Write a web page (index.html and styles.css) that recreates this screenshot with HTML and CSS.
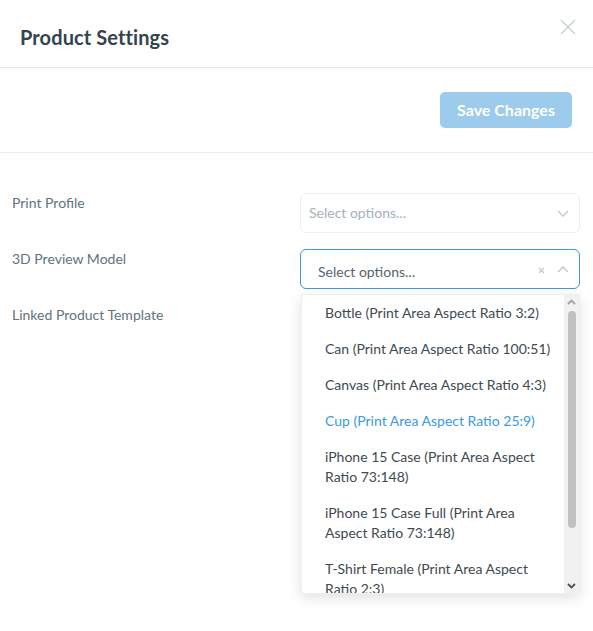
FILE: index.html
```html
<!DOCTYPE html>
<html lang="en">
<head>
<meta charset="utf-8">
<title>Product Settings</title>
<link rel="stylesheet" href="styles.css">
</head>
<body>
<div class="modal">
  <header class="head">
    <h1 class="title">Product Settings</h1>
    <button class="close" type="button" aria-label="Close">
      <svg width="16" height="16" viewBox="0 0 16 16"><path d="M1 1L15 15M15 1L1 15" stroke="#c5d0d3" stroke-width="1.4" fill="none"/></svg>
    </button>
  </header>
  <div class="actions">
    <button class="save" type="button">Save Changes</button>
  </div>
  <div class="form">
    <div class="row">
      <div class="label">Print Profile</div>
      <div class="select">
        <span class="placeholder">Select options...</span>
        <span class="icons">
          <svg class="chev" width="12" height="7" viewBox="0 0 12 7"><path d="M1 1L6 6L11 1" stroke="#bcc6cc" stroke-width="1.3" fill="none"/></svg>
        </span>
      </div>
    </div>
    <div class="row">
      <div class="label">3D Preview Model</div>
      <div class="select open">
        <span class="placeholder">Select options...</span>
        <span class="icons">
          <svg class="clear" width="7" height="7" viewBox="0 0 7 7"><path d="M1 1L6 6M6 1L1 6" stroke="#c3cbd0" stroke-width="1.3" fill="none"/></svg>
          <svg class="chev" width="12" height="7" viewBox="0 0 12 7"><path d="M1 6L6 1L11 6" stroke="#bcc6cc" stroke-width="1.3" fill="none"/></svg>
        </span>
        <div class="menu">
          <ul class="options">
            <li>Bottle (Print Area Aspect Ratio 3:2)</li>
            <li>Can (Print Area Aspect Ratio 100:51)</li>
            <li>Canvas (Print Area Aspect Ratio 4:3)</li>
            <li class="active">Cup (Print Area Aspect Ratio 25:9)</li>
            <li>iPhone 15 Case (Print Area Aspect Ratio 73:148)</li>
            <li>iPhone 15 Case Full (Print Area Aspect Ratio 73:148)</li>
            <li>T-Shirt Female (Print Area Aspect Ratio 2:3)</li>
          </ul>
          <div class="scrollbar">
            <svg class="arrow" width="15" height="14" viewBox="0 0 15 14"><path d="M4 9L7.5 5.5L11 9" stroke="#a3a3a3" stroke-width="1.8" fill="none"/></svg>
            <div class="track"><div class="thumb"></div></div>
            <svg class="arrow" width="15" height="14" viewBox="0 0 15 14"><path d="M4 5L7.5 8.5L11 5" stroke="#505050" stroke-width="1.8" fill="none"/></svg>
          </div>
        </div>
      </div>
    </div>
    <div class="row">
      <div class="label">Linked Product Template</div>
      <div class="empty"></div>
    </div>
  </div>
</div>
</body>
</html>
```

FILE: styles.css
```css
* { box-sizing: border-box; }
html, body { margin: 0; padding: 0; background: #fff; }
body {
  font-family: Lato, "Noto Sans", sans-serif;
  width: 593px;
  height: 631px;
  overflow: hidden;
}
.modal { width: 593px; }

.head {
  height: 68px;
  border-bottom: 1px solid #e9ecef;
  display: flex;
  justify-content: space-between;
  padding: 0 17px 0 20px;
}
.title {
  margin: 0;
  align-self: center;
  font-size: 20px;
  font-weight: 700;
  color: #34444c;
  line-height: 24px;
  padding-top: 6px;
  letter-spacing: 0.1px;
}
.close {
  background: none;
  border: 0;
  padding: 0;
  margin-top: 19px;
  width: 16px;
  height: 16px;
  display: block;
  cursor: pointer;
}
.close svg { display: block; }

.actions {
  height: 85px;
  border-bottom: 1px solid #e9ecef;
  display: flex;
  justify-content: flex-end;
  align-items: flex-start;
  padding: 24px 21px 0 0;
}
.save {
  width: 132px;
  height: 36px;
  background: #9ccbec;
  border: 0;
  border-radius: 5px;
  color: #fff;
  font-family: Lato, "Noto Sans", sans-serif;
  font-weight: 700;
  font-size: 16px;
  padding: 0 0 1px;
}

.form {
  padding: 40px 0 0 12px;
  display: flex;
  flex-direction: column;
  gap: 16px;
}
.row {
  display: grid;
  grid-template-columns: 288px 280px;
  min-height: 40px;
}
.label {
  font-size: 14px;
  line-height: 20px;
  color: #62737c;
}
.select {
  position: relative;
  height: 40px;
  border: 1px solid #ebedee;
  border-radius: 6px;
  display: flex;
  align-items: center;
  padding-left: 8px;
  font-size: 14px;
}
.placeholder { color: #a5b1b8; flex: 1; line-height: 20px; }
.icons {
  display: flex;
  align-items: center;
  gap: 12px;
  padding-right: 10px;
}
.icons svg { display: block; }

.select.open {
  border-color: #3c9be1;
  padding-left: 17px;
  align-items: flex-start;
  padding-top: 12px;
}
.select.open .placeholder { color: #56646c; }
.select.open .icons { padding-top: 5px; }
.select.open .chev { margin-top: -2px; }

.menu {
  position: absolute;
  top: 44px;
  left: 0;
  width: 279px;
  height: 300px;
  background: #fff;
  border: 1px solid #eeeeee;
  border-radius: 3px;
  box-shadow: 0 4px 14px rgba(0, 0, 0, 0.12);
  display: flex;
  overflow: hidden;
}
.options {
  list-style: none;
  margin: 0;
  padding: 0;
  flex: 1;
  overflow: hidden;
}
.options li {
  padding: 8px 10px 8px 23px;
  font-size: 14px;
  line-height: 20px;
  color: #3e4a51;
}
.options li.active { color: #3a9ae0; }

.scrollbar {
  width: 15px;
  background: #f1f1f1;
  display: flex;
  flex-direction: column;
}
.arrow { display: block; flex: none; }
.track {
  flex: 1;
  padding: 2px 3px 0 3px;
}
.thumb {
  width: 8px;
  height: 217px;
  margin-left: 1px;
  background: #c1c1c1;
  border-radius: 4px;
}
```
